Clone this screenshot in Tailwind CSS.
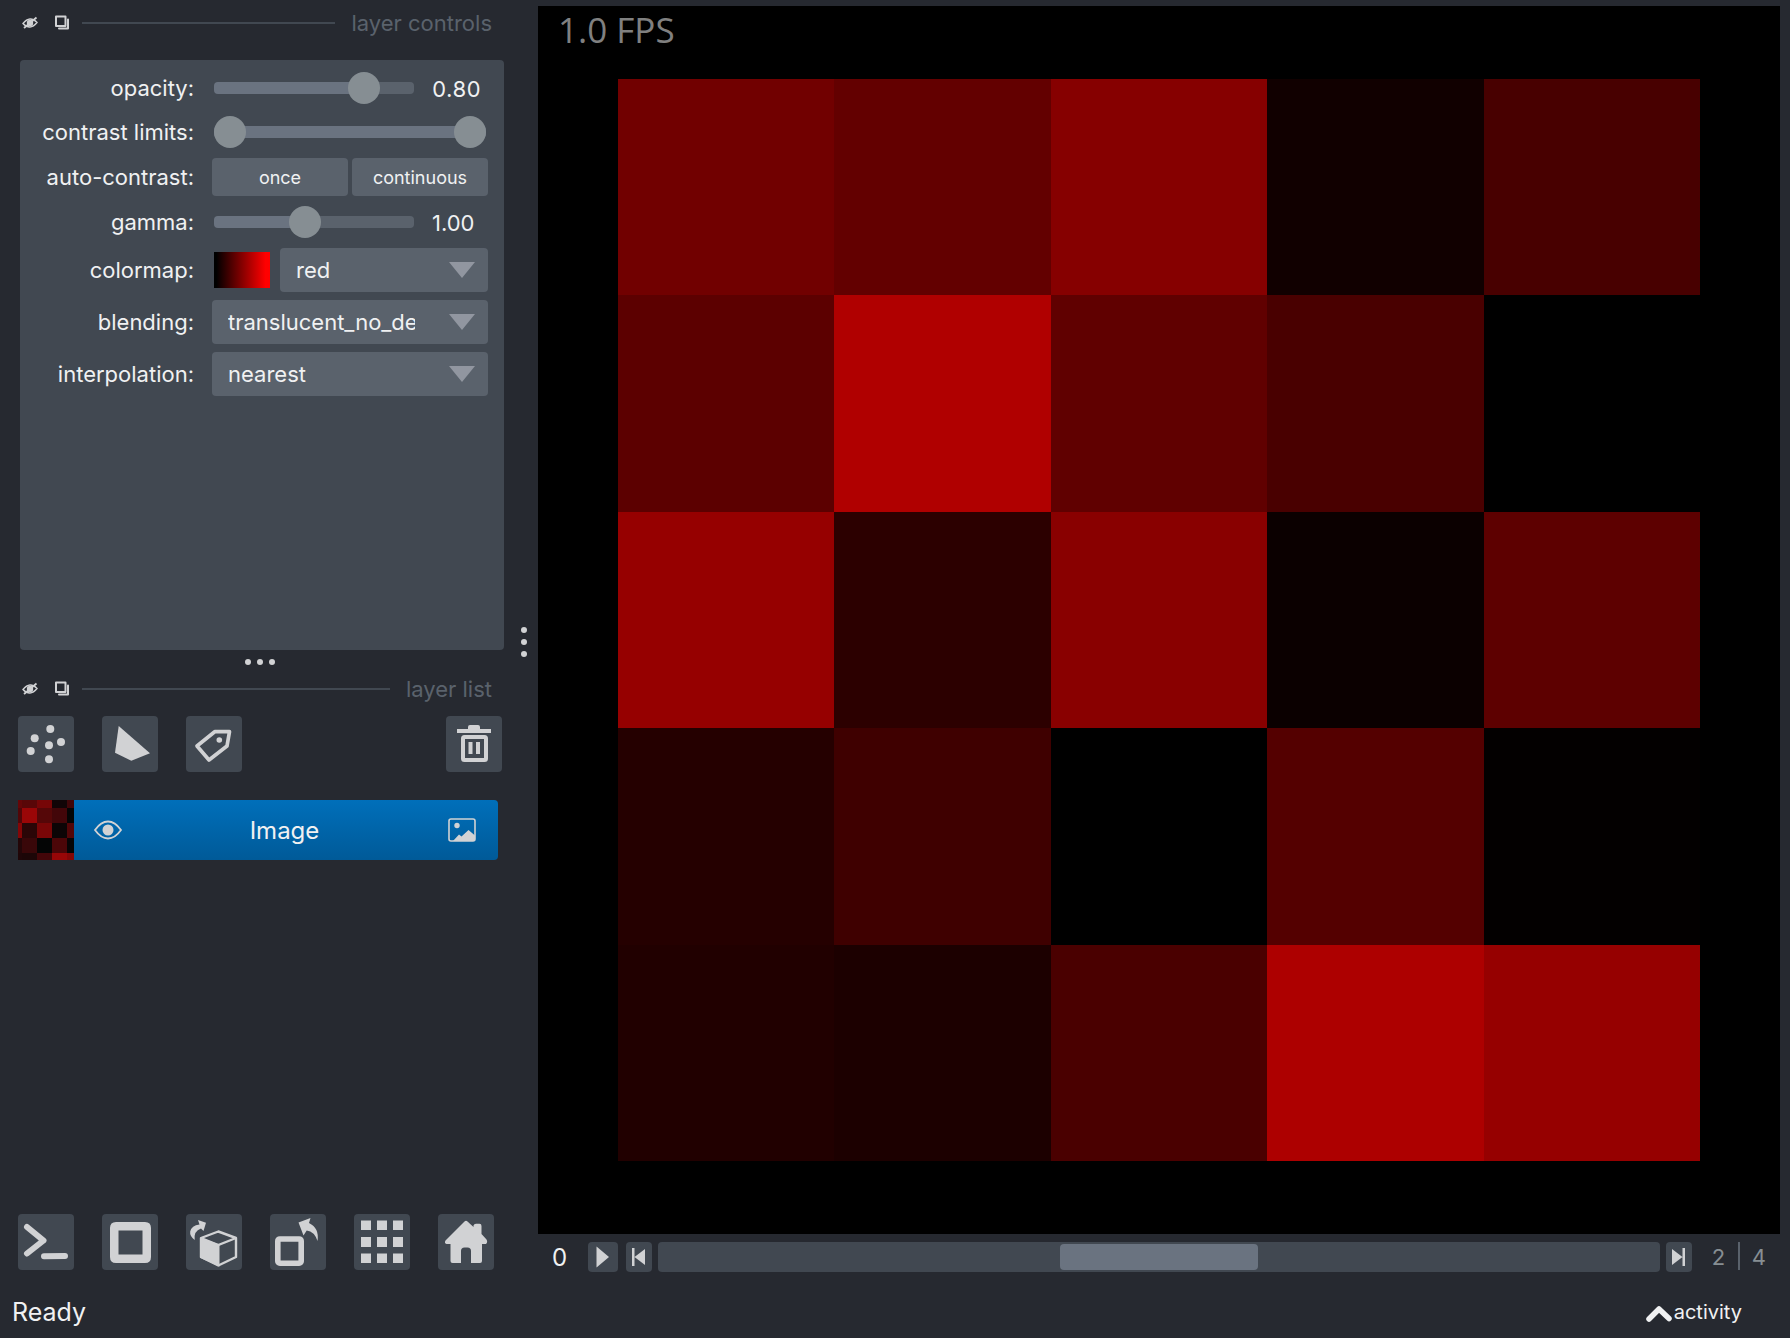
<!DOCTYPE html>
<html lang="en">
<head>
<meta charset="utf-8">
<title>napari</title>
<script src="https://cdn.jsdelivr.net/npm/@tailwindcss/browser@4"></script>
</head>
<body class="flex h-screen flex-col overflow-hidden bg-[#262930] font-[Inter,sans-serif] text-[22px] leading-7 text-[#f0f1f2]">
<svg class="hidden">
  <symbol id="hide" viewBox="0 0 16 16"><path d="M1 8.500Q8 0 15 7.500Q8 16 1 8.500Z" fill="none" stroke="currentColor" stroke-width="1.400"/><circle cx="8" cy="8" r="3.200" fill="currentColor"/><path d="M2 13 14.500 2.500" stroke="currentColor" stroke-width="1.800"/></symbol>
  <symbol id="float" viewBox="0 0 16 16"><path d="M2 1.500h9.500v9.500H2Z" fill="none" stroke="currentColor" stroke-width="2" stroke-linejoin="round"/><path d="M14 4.500v9h-9" fill="none" stroke="currentColor" stroke-width="2" stroke-linejoin="round" stroke-linecap="round"/></symbol>
</svg>
<main class="flex min-h-0 flex-1">
  <aside class="flex w-[538px] shrink-0">
    <div class="flex min-w-0 flex-1 flex-col">
      <header class="flex h-[60px] items-start pt-[9px] pr-[18px] pl-[22px]">
        <div class="flex h-7 flex-1 items-center">
          <button aria-label="Hide layer controls" class="mr-4 text-[#d1d2d4]"><svg class="size-4"><use href="#hide"/></svg></button>
          <button aria-label="Float layer controls" class="mr-3 text-[#d1d2d4]"><svg class="size-4"><use href="#float"/></svg></button>
          <div class="mr-4 h-0.5 flex-1 bg-[#414851]"></div>
          <h2 class="text-[#5a626c]">layer controls</h2>
        </div>
      </header>
      <section class="mr-1.5 ml-5 h-[590px] rounded bg-[#414851] pt-1.5 pr-4">
        <div class="grid grid-cols-[174px_1fr] items-center gap-x-[18px]">
          <label for="opacity" class="text-right">opacity:</label>
          <div class="flex h-11 items-center pl-0.5">
            <input id="opacity" type="range" min="0" max="1" step="0.01" value="0.8" class="h-8 w-[200px] appearance-none bg-transparent [&::-webkit-slider-runnable-track]:h-3 [&::-webkit-slider-runnable-track]:rounded [&::-webkit-slider-runnable-track]:bg-[linear-gradient(to_right,#6a7380_75%,#5a626c_75%)] [&::-webkit-slider-thumb]:-mt-2.5 [&::-webkit-slider-thumb]:size-8 [&::-webkit-slider-thumb]:appearance-none [&::-webkit-slider-thumb]:rounded-full [&::-webkit-slider-thumb]:bg-[#868e93]">
            <output for="opacity" class="ml-[18px] pt-0.5 tabular-nums">0.80</output>
          </div>
          <label for="clim-low" class="text-right">contrast limits:</label>
          <div class="grid h-11 items-center px-0.5">
            <input id="clim-low" type="range" min="0" max="100" value="0" class="col-start-1 row-start-1 h-8 w-full appearance-none bg-transparent [&::-webkit-slider-runnable-track]:h-3 [&::-webkit-slider-runnable-track]:rounded [&::-webkit-slider-runnable-track]:bg-[#6a7380] [&::-webkit-slider-thumb]:-mt-2.5 [&::-webkit-slider-thumb]:size-8 [&::-webkit-slider-thumb]:appearance-none [&::-webkit-slider-thumb]:rounded-full [&::-webkit-slider-thumb]:bg-[#868e93]">
            <input id="clim-high" aria-label="upper contrast limit" type="range" min="0" max="100" value="100" class="pointer-events-none col-start-1 row-start-1 h-8 w-full appearance-none bg-transparent [&::-webkit-slider-runnable-track]:h-3 [&::-webkit-slider-thumb]:pointer-events-auto [&::-webkit-slider-thumb]:-mt-2.5 [&::-webkit-slider-thumb]:size-8 [&::-webkit-slider-thumb]:appearance-none [&::-webkit-slider-thumb]:rounded-full [&::-webkit-slider-thumb]:bg-[#868e93]">
          </div>
          <span class="text-right">auto-contrast:</span>
          <div class="grid h-[46px] grid-cols-2 items-center gap-1 text-lg">
            <button class="h-[38px] rounded bg-[#5a626c] pt-0.5">once</button>
            <button class="h-[38px] rounded bg-[#5a626c] pt-0.5">continuous</button>
          </div>
          <label for="gamma" class="text-right">gamma:</label>
          <div class="flex h-11 items-center pl-0.5">
            <input id="gamma" type="range" min="0.2" max="2" step="0.01" value="1" class="h-8 w-[200px] appearance-none bg-transparent [&::-webkit-slider-runnable-track]:h-3 [&::-webkit-slider-runnable-track]:rounded [&::-webkit-slider-runnable-track]:bg-[linear-gradient(to_right,#6a7380_45%,#5a626c_45%)] [&::-webkit-slider-thumb]:-mt-2.5 [&::-webkit-slider-thumb]:size-8 [&::-webkit-slider-thumb]:appearance-none [&::-webkit-slider-thumb]:rounded-full [&::-webkit-slider-thumb]:bg-[#868e93]">
            <output for="gamma" class="ml-[18px] pt-0.5">1.00</output>
          </div>
          <label for="colormap" class="text-right">colormap:</label>
          <div class="flex h-[52px] items-center pl-0.5">
            <div class="mr-2.5 h-9 w-14 bg-[linear-gradient(to_right,#000_4%,#f00_92%)]"></div>
            <div class="grid flex-1 items-center">
              <select id="colormap" class="col-start-1 row-start-1 h-11 w-full appearance-none rounded bg-[#5a626c] pr-[73px] pl-4"><option>red</option></select>
              <svg class="pointer-events-none col-start-1 row-start-1 mr-3 h-4 w-[28px] justify-self-end" viewBox="0 0 28 16"><path d="M1 0h26L14 16Z" fill="#9196a0"/></svg>
            </div>
          </div>
          <label for="blending" class="text-right">blending:</label>
          <div class="grid h-[52px] items-center">
            <select id="blending" class="col-start-1 row-start-1 h-11 w-full appearance-none rounded bg-[#5a626c] pr-[73px] pl-4"><option>translucent_no_depth</option></select>
            <svg class="pointer-events-none col-start-1 row-start-1 mr-3 h-4 w-[28px] justify-self-end" viewBox="0 0 28 16"><path d="M1 0h26L14 16Z" fill="#9196a0"/></svg>
          </div>
          <label for="interpolation" class="text-right">interpolation:</label>
          <div class="grid h-[52px] items-center">
            <select id="interpolation" class="col-start-1 row-start-1 h-11 w-full appearance-none rounded bg-[#5a626c] pr-[73px] pl-4"><option>nearest</option></select>
            <svg class="pointer-events-none col-start-1 row-start-1 mr-3 h-4 w-[28px] justify-self-end" viewBox="0 0 28 16"><path d="M1 0h26L14 16Z" fill="#9196a0"/></svg>
          </div>
        </div>
      </section>
      <div class="flex h-6 items-center justify-center gap-1.5 pl-2.5">
        <i class="size-1.5 rounded-full bg-[#d1d2d4]"></i><i class="size-1.5 rounded-full bg-[#d1d2d4]"></i><i class="size-1.5 rounded-full bg-[#d1d2d4]"></i>
      </div>
      <header class="flex h-[42px] items-start pt-px pr-[18px] pl-[22px]">
        <div class="flex h-7 flex-1 items-center">
          <button aria-label="Hide layer list" class="mr-4 text-[#d1d2d4]"><svg class="size-4"><use href="#hide"/></svg></button>
          <button aria-label="Float layer list" class="mr-3 text-[#d1d2d4]"><svg class="size-4"><use href="#float"/></svg></button>
          <div class="mr-4 h-0.5 flex-1 bg-[#414851]"></div>
          <h2 class="text-[#5a626c]">layer list</h2>
        </div>
      </header>
      <div class="flex gap-7 pr-2 pl-[18px] text-[#d1d2d4]">
        <button aria-label="New points layer" class="size-14 rounded bg-[#414851]"><svg viewBox="0 0 56 56" fill="currentColor"><circle cx="32.300" cy="13" r="4"/><circle cx="16.700" cy="22.300" r="4"/><circle cx="43" cy="26" r="4"/><circle cx="31" cy="29.300" r="4"/><circle cx="12.700" cy="35" r="4"/><circle cx="31" cy="43.300" r="4"/></svg></button>
        <button aria-label="New shapes layer" class="size-14 rounded bg-[#414851]"><svg viewBox="0 0 56 56" fill="currentColor"><path d="M16.700 10 48 37.300 29.300 44.700 13 36.700Z"/></svg></button>
        <button aria-label="New labels layer" class="size-14 rounded bg-[#414851]"><svg viewBox="0 0 56 56" fill="currentColor"><path d="M11 30 28.700 15.700H43.500L41 30 23 44Z" fill="none" stroke="currentColor" stroke-width="3.700" stroke-linejoin="round"/><circle cx="33.300" cy="24" r="2.800"/></svg></button>
        <button aria-label="Delete selected layers" class="ml-auto size-14 rounded bg-[#414851]"><svg viewBox="0 0 56 56" fill="currentColor"><path d="M11 13H22V11Q22 9 24 9H32Q34 9 34 11V13H45V17H11Z"/><rect x="17" y="21" width="23" height="23" rx="1.500" fill="none" stroke="currentColor" stroke-width="4"/><path d="M22.500 26h4v12h-4ZM30 26h4v12h-4Z"/></svg></button>
      </div>
      <div class="mt-7 mr-3 ml-[18px] flex h-[60px] overflow-hidden rounded-r bg-linear-to-b from-[#006fba] to-[#005a98]">
        <div class="grid w-14 grid-cols-[4px_15px_15px_15px_7px] grid-rows-[8px_15px_15px_15px_7px]">
          <i class="bg-[#650608]"></i><i class="bg-[#590708]"></i><i class="bg-[#770607]"></i><i class="bg-[#110507]"></i><i class="bg-[#400609]"></i>
          <i class="bg-[#520608]"></i><i class="bg-[#9a0607]"></i><i class="bg-[#550708]"></i><i class="bg-[#420609]"></i><i class="bg-[#040505]"></i>
          <i class="bg-[#840607]"></i><i class="bg-[#2a0607]"></i><i class="bg-[#790607]"></i><i class="bg-[#0c0506]"></i><i class="bg-[#530608]"></i>
          <i class="bg-[#230608]"></i><i class="bg-[#390709]"></i><i class="bg-[#040505]"></i><i class="bg-[#4b0608]"></i><i class="bg-[#060506]"></i>
          <i class="bg-[#1f0608]"></i><i class="bg-[#1c0607]"></i><i class="bg-[#430609]"></i><i class="bg-[#980607]"></i><i class="bg-[#840607]"></i>
        </div>
        <div class="flex flex-1 items-center pr-[22px] pl-[19px]">
          <button aria-label="Toggle visibility" class="text-[#d1d2d4]"><svg class="h-5 w-[30px]" viewBox="0 0 30 20"><path d="M2 10Q8 1.500 15 1.500T28 10Q22 18.500 15 18.500T2 10Z" fill="none" stroke="currentColor" stroke-width="1.800"/><circle cx="15" cy="10" r="5.500" fill="currentColor"/></svg></button>
          <span class="flex-1 pt-0.5 pr-0.5 text-center text-2xl">Image</span>
          <svg class="h-6 w-7 text-[#d1d2d4]" viewBox="0 0 28 24"><rect x="1" y="1" width="26" height="22" rx="2" fill="none" stroke="currentColor" stroke-width="1.600"/><circle cx="9" cy="7.500" r="2.700" fill="currentColor"/><path d="M5 23 11 16.500 13.500 18.500 20.500 12 27 17.500V23Z" fill="currentColor"/></svg>
        </div>
      </div>
      <div class="mt-auto mb-3.5 flex gap-7 pl-[18px] text-[#d1d2d4]">
        <button aria-label="Open console" class="size-14 rounded bg-[#414851]"><svg viewBox="0 0 56 56" fill="none" stroke="currentColor" stroke-linecap="round" stroke-linejoin="round" stroke-width="6"><path d="M9 13 25.500 26.500 9 39.500"/><path d="M26 42.200 47 42"/></svg></button>
        <button aria-label="Toggle 2D/3D view" class="size-14 rounded bg-[#414851]"><svg viewBox="0 0 56 56" fill="currentColor" fill-rule="evenodd"><path d="M14 8H43Q49 8 49 14V43Q49 49 43 49H14Q8 49 8 43V14Q8 8 14 8ZM16.500 16.500V40.500H40.500V16.500Z"/></svg></button>
        <button aria-label="Change order of the visible axes" class="size-14 rounded bg-[#414851]"><svg viewBox="0 0 56 56" fill="currentColor"><path d="M15 24 32.300 17.500 50 24V43L32.300 51.500 15 43Z" fill="none" stroke="currentColor" stroke-width="2.400" stroke-linejoin="round"/><path d="M15 24 32.300 31 50 24" fill="none" stroke="currentColor" stroke-width="2.400"/><path d="M14 23.500 33.500 30.500V52.500L14 43.700Z"/><path d="M12 6 20 8.700 17.500 17 15 14.500Q7.500 17 8.700 26Q3.500 22 4.200 17.500Q5.500 11.500 13.500 10.500Z"/></svg></button>
        <button aria-label="Transpose axes" class="size-14 rounded bg-[#414851]"><svg viewBox="0 0 56 56" fill="currentColor"><rect x="7.800" y="25" width="23.400" height="24.200" rx="2" fill="none" stroke="currentColor" stroke-width="5.600"/><path d="M28.500 8.500 40.500 4 39 9Q49.500 14 47.500 27Q44.500 17.500 36.700 16.500L33.500 21.500Z"/></svg></button>
        <button aria-label="Toggle grid mode" class="size-14 rounded bg-[#414851]"><svg viewBox="0 0 56 56" fill="currentColor"><path d="M7 6.500h10v9.500H7ZM23 6.500h10v9.500H23ZM39 6.500h10v9.500H39ZM7 23h10v10H7ZM23 23h10v10H23ZM39 23h10v10H39ZM7 39.500h10v9.500H7ZM23 39.500h10v9.500H23ZM39 39.500h10v9.500H39Z"/></svg></button>
        <button aria-label="Reset view" class="size-14 rounded bg-[#414851]"><svg viewBox="0 0 56 56" fill="currentColor"><path d="M26.500 7.500Q28 6.200 29.500 7.500L35.500 13V11.500Q36 9.700 38 9.700H41.500Q43.500 9.700 43.500 12V20L48.500 25.500Q50 28 48 30H44V47Q44 49 42 49H33V37Q33 33.500 29.500 33.500H26.500Q23 33.500 23 37V49H14.500Q12.500 49 12.500 47V30H8.500Q6 29 7.500 26.500Z"/></svg></button>
      </div>
    </div>
    <div class="flex w-7 flex-col items-center justify-center gap-1.5">
      <i class="size-1.5 rounded-full bg-[#d1d2d4]"></i><i class="size-1.5 rounded-full bg-[#d1d2d4]"></i><i class="size-1.5 rounded-full bg-[#d1d2d4]"></i>
    </div>
  </aside>
  <section class="flex min-w-0 flex-1 flex-col pt-1.5">
    <div class="relative mr-2.5 flex min-h-0 flex-1 items-center justify-center bg-black">
      <span class="absolute top-1 left-5 font-['Open_Sans',sans-serif] text-[35px] leading-10 text-[#808080]">1.0 FPS</span>
      <div class="grid aspect-square h-[88.1%] grid-cols-5 grid-rows-5">
        <i class="bg-[#710000]"></i><i class="bg-[#630000]"></i><i class="bg-[#860000]"></i><i class="bg-[#110000]"></i><i class="bg-[#480000]"></i>
        <i class="bg-[#5c0000]"></i><i class="bg-[#b00000]"></i><i class="bg-[#600000]"></i><i class="bg-[#490000]"></i><i class="bg-[#000000]"></i>
        <i class="bg-[#960000]"></i><i class="bg-[#2c0000]"></i><i class="bg-[#890000]"></i><i class="bg-[#0b0000]"></i><i class="bg-[#5d0000]"></i>
        <i class="bg-[#250000]"></i><i class="bg-[#3f0000]"></i><i class="bg-[#000000]"></i><i class="bg-[#540000]"></i><i class="bg-[#030000]"></i>
        <i class="bg-[#210000]"></i><i class="bg-[#1c0000]"></i><i class="bg-[#4a0000]"></i><i class="bg-[#ad0000]"></i><i class="bg-[#960000]"></i>
      </div>
    </div>
    <div class="flex h-[50px] items-start pt-2 pr-6 pl-3.5 leading-[30px]">
      <label for="frame" class="w-9 text-2xl leading-8">0</label>
      <button aria-label="Play" class="mr-2 h-[30px] w-[30px] rounded bg-[#414851]"><svg viewBox="0 0 30 30" fill="#d1d2d4"><path d="M8.500 4.500 21 15 8.500 25.500Z"/></svg></button>
      <button aria-label="Previous frame" class="mr-1.5 h-[30px] w-[26px] rounded bg-[#414851]"><svg viewBox="0 0 26 30" fill="#d1d2d4"><path d="M6 6h2.500v18H6ZM19 7v16L8.500 15Z"/></svg></button>
      <input id="frame" type="range" min="0" max="4" value="2" class="h-[30px] min-w-0 flex-1 appearance-none rounded bg-[#414851] px-0.5 [&::-webkit-slider-thumb]:h-[26px] [&::-webkit-slider-thumb]:w-[198px] [&::-webkit-slider-thumb]:appearance-none [&::-webkit-slider-thumb]:rounded [&::-webkit-slider-thumb]:bg-[#6a7380]">
      <button aria-label="Next frame" class="mr-5 ml-1.5 h-[30px] w-[26px] rounded bg-[#414851]"><svg viewBox="0 0 26 30" fill="#d1d2d4"><path d="M6 7v16l10.500-8ZM16.500 6H19v18h-2.500Z"/></svg></button>
      <span class="w-[26px] text-[#868e93]">2</span>
      <span class="mr-3 h-7 w-0.5 bg-[#5a626c]"></span>
      <span class="text-[#868e93]">4</span>
    </div>
  </section>
</main>
<footer class="flex h-[54px] shrink-0 items-center justify-between pt-0.5 pr-12 pl-3">
  <span class="text-[25px]">Ready</span>
  <button class="flex items-center text-xl"><svg class="mr-px h-5 w-7" viewBox="0 0 28 20" fill="none" stroke="#f0f1f2" stroke-width="5.500" stroke-linecap="round" stroke-linejoin="round"><path d="M4 17 14 7 24 16.500"/></svg>activity</button>
</footer>
</body>
</html>
